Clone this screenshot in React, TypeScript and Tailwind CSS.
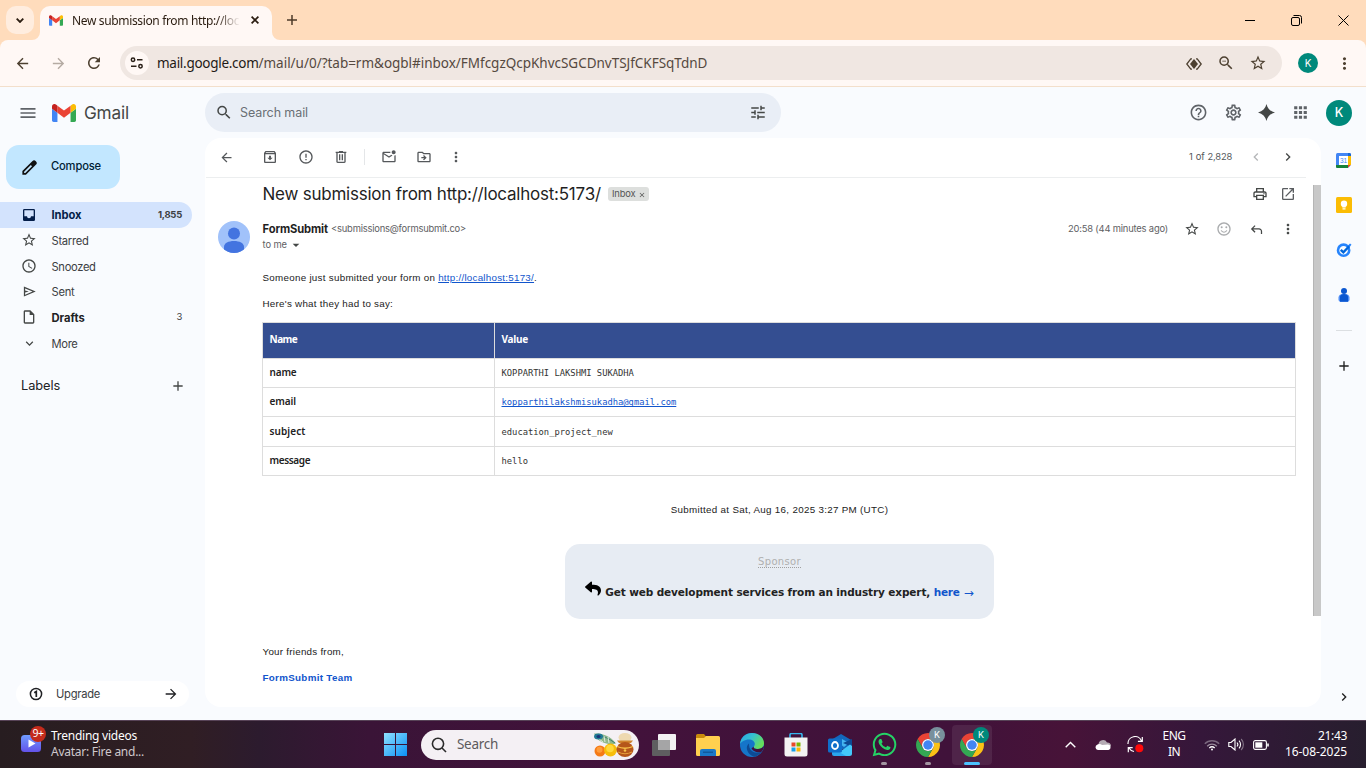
import type { ReactNode } from "react";
import {
  MdAdd,
  MdApps,
  MdArrowBack,
  MdArrowDropDown,
  MdArrowForward,
  MdChevronLeft,
  MdChevronRight,
  MdClose,
  MdErrorOutline,
  MdExpandMore,
  MdHelpOutline,
  MdMenu,
  MdMoreVert,
  MdOpenInNew,
  MdOutlineArchive,
  MdOutlineDriveFileMove,
  MdOutlineInsertDriveFile,
  MdOutlineMarkEmailUnread,
  MdOutlinePrint,
  MdOutlineSentimentSatisfied,
  MdOutlineSettings,
  MdRefresh,
  MdSchedule,
  MdSearch,
  MdStarBorder,
  MdTune,
  MdZoomOut,
} from "react-icons/md";
import { FaReply, FaWhatsapp } from "react-icons/fa";

function GmailMark({ className }: { className: string }) {
  return (
    <svg viewBox="52 42 88 66" className={className}>
      <path fill="#4285f4" d="M58 108h14V74L52 59v43c0 3.32 2.69 6 6 6" />
      <path fill="#34a853" d="M120 108h14c3.32 0 6-2.69 6-6V59l-20 15" />
      <path fill="#fbbc04" d="M120 48v26l20-15v-8c0-7.42-8.47-11.65-14.4-7.2" />
      <path fill="#ea4335" d="M72 74V48l24 18 24-18v26L96 92" />
      <path fill="#c5221f" d="M52 51v8l20 15V48l-5.6-4.2c-5.94-4.45-14.4-.22-14.4 7.2" />
    </svg>
  );
}

/** Fixed-width slot that centres its icon, so neighbouring icons share a rhythm. */
function Slot({ className, children }: { className: string; children: ReactNode }) {
  return <div className={"flex shrink-0 items-center justify-center " + className}>{children}</div>;
}

function TabStrip() {
  return (
    <div className="flex h-10 items-end bg-[#ffdcbc] text-[#2a1c10]">
      <Slot className="mb-1.5 ml-1.5 h-7 w-7 rounded-[10px] bg-[#ffeddf]">
        <svg viewBox="0 0 8 5" className="h-[5px] w-2" fill="none" stroke="currentColor" strokeWidth="1.800">
          <path d="M.7.700L4 4 7.300.700" />
        </svg>
      </Slot>
      <div className="relative ml-1.5 flex h-[34px] w-[232px] items-center rounded-t-[10px] bg-[#fff8f5] pb-1.5">
        <svg className="absolute bottom-0 -left-2 h-2 w-2" viewBox="0 0 8 8">
          <path fill="#fff8f5" d="M8 0v8H0a8 8 0 0 0 8-8" />
        </svg>
        <svg className="absolute -right-2 bottom-0 h-2 w-2" viewBox="0 0 8 8">
          <path fill="#fff8f5" d="M0 0v8h8a8 8 0 0 1-8-8" />
        </svg>
        <GmailMark className="ml-[9px] h-[11px] w-[14px]" />
        <div className="ml-[9px] w-[167px] overflow-hidden whitespace-nowrap [mask-image:linear-gradient(to_right,black_145px,transparent_168px)] pt-px font-['Noto_Sans',sans-serif] text-[12px] leading-4 tracking-[-0.35px]">
          New submission from http://loc
        </div>
        <Slot className="ml-2 h-4 w-4">
          <svg viewBox="0 0 8 8" className="h-2 w-2" stroke="currentColor" strokeWidth="1.700">
            <path d="M.6.600l6.800 6.800M7.400.600L.600 7.400" />
          </svg>
        </Slot>
      </div>
      <Slot className="mb-3 ml-3 h-4 w-4">
        <svg viewBox="0 0 10 10" className="h-[10px] w-[10px]" stroke="#4d3a28" strokeWidth="1.500">
          <path d="M0 5h10M5 0v10" />
        </svg>
      </Slot>
      <div className="mb-2 ml-auto flex items-center text-black">
        <svg viewBox="0 0 10 10" className="mr-9 h-[10px] w-[10px]" stroke="currentColor" shapeRendering="crispEdges">
          <path d="M0 4.500h10" />
        </svg>
        <svg viewBox="0 0 11 11" className="mr-9 h-[11px] w-[11px]" fill="none" stroke="currentColor">
          <rect x=".5" y="2.500" width="8" height="8" rx="1.500" />
          <path d="M2.500 .5h6a2 2 0 0 1 2 2v6" />
        </svg>
        <svg viewBox="0 0 11 11" className="my-1.5 mr-[17px] h-[11px] w-[11px]" fill="none" stroke="currentColor">
          <path d="M.5.5l10 10M10.500.5l-10 10" />
        </svg>
      </div>
    </div>
  );
}

function Toolbar() {
  return (
    <div className="h-[47px] bg-[#ffdcbc]">
      <div className="flex h-[47px] items-center rounded-t-[8px] border-b border-[#f3dfcb] bg-[#fff8f5] text-[#4d4030]">
        <Slot className="ml-3 w-5">
          <MdArrowBack className="h-[17px] w-[17px]" />
        </Slot>
        <Slot className="ml-4 w-5 text-[#b5aba3]">
          <MdArrowForward className="h-[17px] w-[17px]" />
        </Slot>
        <Slot className="ml-4 w-5">
          <MdRefresh className="h-[18px] w-[18px]" />
        </Slot>
        <div className="ml-4 flex h-[34px] w-[1162px] shrink-0 items-center rounded-full bg-[#f0e7e2]">
          <Slot className="ml-[5px] h-6 w-6 rounded-full bg-[#fff8f5]">
            <svg viewBox="0 0 14 12" className="h-3 w-[14px]" fill="none" stroke="#2a2018" strokeWidth="1.500">
              <circle cx="3" cy="2.700" r="1.700" />
              <path d="M7 2.700h5.500M1 9.300h5.500" />
              <circle cx="10.500" cy="9.300" r="1.700" />
            </svg>
          </Slot>
          <div className="ml-2 font-['Noto_Sans',sans-serif] text-[13.500px] leading-5 whitespace-nowrap text-[#55493f]">
            <span className="tracking-[-0.28px] text-[#1f1a16]">mail.google.com</span>
            <span className="tracking-[-0.02px]">/mail/u/0/?tab=rm&amp;ogbl#inbox/FMfcgzQcpKhvcSGCDnvTSJfCKFSqTdnD</span>
          </div>
          <Slot className="ml-auto w-8">
            <svg viewBox="0 0 16 12" className="mt-px h-3 w-4" fill="none" stroke="currentColor" strokeWidth="1.300">
              <path d="M6 .8H4.800L.8 6l4 5.200H6M10 .8h1.200l4 5.200-4 5.200H10" />
              <path d="M8 1l4 5-4 5-4-5z" fill="currentColor" stroke="none" />
            </svg>
          </Slot>
          <Slot className="w-8">
            <MdZoomOut className="h-[18px] w-[18px]" />
          </Slot>
          <Slot className="mr-2 w-8">
            <MdStarBorder className="h-[18px] w-[18px]" />
          </Slot>
        </div>
        <Slot className="ml-4 h-5 w-5 rounded-full bg-[#00897b] font-['Inter',sans-serif] text-[10px] text-white">K</Slot>
        <Slot className="ml-4 w-5">
          <MdMoreVert className="h-[19px] w-[19px]" />
        </Slot>
      </div>
    </div>
  );
}

function GmailHeader() {
  return (
    <div className="flex h-[51px] items-center text-[#5f6368]">
      <Slot className="ml-[18px] w-5">
        <MdMenu className="h-5 w-5" />
      </Slot>
      <GmailMark className="ml-3.5 h-[18px] w-6" />
      <div className="ml-2 w-[50px] text-[17.200px] tracking-[-0.2px] text-[#444746]">Gmail</div>
      <div className="ml-[71px] flex h-[39px] w-[576px] items-center rounded-full bg-[#e9eef6]">
        <Slot className="ml-[10px] w-[18px]">
          <MdSearch className="h-[19px] w-[19px] text-[#444746]" />
        </Slot>
        <div className="ml-[7px] pt-px text-[12.500px] tracking-[-0.09px] text-[#6a6f75]">Search mail</div>
        <Slot className="mr-[14px] ml-auto w-[18px]">
          <MdTune className="h-[19px] w-[19px] text-[#444746]" />
        </Slot>
      </div>
      <div className="mr-[14px] ml-auto flex items-center">
        <Slot className="w-[35px]">
          <MdHelpOutline className="h-[19px] w-[19px]" />
        </Slot>
        <Slot className="w-[35px]">
          <MdOutlineSettings className="h-[19px] w-[19px]" />
        </Slot>
        <Slot className="mr-px w-[31px]">
          <svg viewBox="0 0 24 24" className="h-[17px] w-[17px]" fill="#444746">
            <path d="M12 0c1.500 6.500 5.500 10.500 12 12-6.500 1.500-10.500 5.500-12 12-1.500-6.500-5.500-10.500-12-12C6.500 10.500 10.500 6.500 12 0z" />
          </svg>
        </Slot>
        <Slot className="w-[35px]">
          <MdApps className="h-[19px] w-[19px]" />
        </Slot>
        <Slot className="ml-2 h-[26px] w-[26px] rounded-full bg-[#00897b] pt-px text-[12.500px] font-medium text-white">K</Slot>
      </div>
    </div>
  );
}

function NavItem({ icon, label, count, className = "" }: { icon: ReactNode; label: ReactNode; count?: string; className?: string }) {
  return (
    <div className={"flex h-[25.650px] w-[192px] items-center rounded-r-full pr-[10px] text-[11.200px] text-[#3c4043] " + className}>
      <Slot className="ml-[21px] w-4 text-[#444746]">{icon}</Slot>
      <div className="ml-[14.500px] pt-px leading-4">{label}</div>
      {count && <div className="ml-auto text-[9.500px] tracking-[-0.25px]">{count}</div>}
    </div>
  );
}

function Sidebar() {
  return (
    <div className="flex w-[205px] shrink-0 flex-col">
      <div className="mt-[7px] ml-1.5 flex h-11 w-[114px] items-center rounded-[13px] bg-[#c2e7ff] text-[#001d35]">
        <Slot className="ml-[15px] w-4">
          <svg viewBox="0 0 24 24" className="h-[19px] w-[19px] shrink-0" fill="#111">
            <path fillRule="evenodd" d="M3 21v-4.500L15.500 4a3 3 0 0 1 4.500 0 3 3 0 0 1 0 4.500L7.500 21zM5.200 18.800h1.500l8.500-8.500-1.500-1.500-8.500 8.500z" />
          </svg>
        </Slot>
        <div className="ml-[14px] pb-px text-[11.200px] font-medium tracking-[-0.17px]">Compose</div>
      </div>
      <div className="mt-[13px]">
        <NavItem
          className="bg-[#d3e3fd] font-bold"
          icon={
            <svg viewBox="0 0 24 24" className="h-4 w-4" fill="#041e49">
              <path fillRule="evenodd" d="M5 3h14a2 2 0 0 1 2 2v14a2 2 0 0 1-2 2H5a2 2 0 0 1-2-2V5a2 2 0 0 1 2-2zm0 2v9h4a3 3 0 0 0 6 0h4V5z" />
            </svg>
          }
          label={<span className="tracking-[-0.06px] text-[#041e49]">Inbox</span>}
          count="1,855"
        />
        <NavItem icon={<MdStarBorder className="h-4 w-4" />} label={<span className="tracking-[-0.28px]">Starred</span>} />
        <NavItem icon={<MdSchedule className="h-4 w-4" />} label={<span className="tracking-[-0.33px]">Snoozed</span>} />
        <NavItem
          icon={
            <svg viewBox="0 0 24 24" className="h-[15px] w-[15px]" fill="currentColor">
              <path d="M3 20V4l19 8zm2-3l11.850-5L5 7v3.500l6 1.500-6 1.500z" />
            </svg>
          }
          label={<span className="tracking-[-0.25px]">Sent</span>}
        />
        <NavItem icon={<MdOutlineInsertDriveFile className="h-4 w-4" />} label={<span className="font-bold text-[#202124]">Drafts</span>} count="3" />
        <NavItem icon={<MdExpandMore className="h-[15px] w-[15px]" />} label={<span className="tracking-[-0.34px]">More</span>} />
      </div>
      <div className="mt-5 flex h-[20px] items-center text-[#202124]">
        <div className="ml-[21px] text-[12.800px] tracking-[-0.05px]">Labels</div>
        <Slot className="mr-[19px] ml-auto w-4">
          <MdAdd className="h-4 w-4 text-[#444746]" />
        </Slot>
      </div>
      <div className="mt-auto mb-[13px] ml-4 flex h-[26px] w-[173px] items-center rounded-full bg-white text-[#202124]">
        <Slot className="ml-3 w-4">
          <svg viewBox="0 0 14 14" className="h-[14px] w-[14px]" fill="none" stroke="currentColor" strokeWidth="1.500">
            <circle cx="7" cy="7" r="5.600" />
            <path d="M5.200 5.700L7.300 4.500V10" strokeWidth="1.700" />
          </svg>
        </Slot>
        <div className="ml-3 text-[11.200px] tracking-[-0.27px] text-[#3c4043]">Upgrade</div>
        <Slot className="mr-[10px] ml-auto w-4">
          <MdArrowForward className="h-4 w-4" />
        </Slot>
      </div>
    </div>
  );
}

function MailToolbar() {
  return (
    <div className="mr-[15px] ml-px flex h-10 items-center border-b border-[#eceeef] pb-px text-[#55585b]">
      <Slot className="ml-2 w-6">
        <MdArrowBack className="h-[15px] w-[15px]" />
      </Slot>
      <Slot className="ml-5 w-6">
        <MdOutlineArchive className="h-4 w-4" />
      </Slot>
      <Slot className="ml-3 w-6">
        <MdErrorOutline className="h-4 w-4" />
      </Slot>
      <Slot className="ml-[11px] w-6">
        <svg viewBox="0 0 24 24" className="h-4 w-4" fill="currentColor">
          <path d="M7 21q-.825 0-1.412-.587T5 19V6H4V4h5V3h6v1h5v2h-1v13q0 .825-.587 1.413T17 21zM17 6H7v13h10zM9 17h2V8H9zm4 0h2V8h-2z" />
        </svg>
      </Slot>
      <div className="ml-[11px] h-4 w-px bg-[#e4e6e8]" />
      <Slot className="ml-3 w-6">
        <MdOutlineMarkEmailUnread className="h-4 w-4" />
      </Slot>
      <Slot className="ml-[11px] w-6">
        <MdOutlineDriveFileMove className="h-4 w-4" />
      </Slot>
      <Slot className="ml-2 w-6">
        <MdMoreVert className="h-4 w-4" />
      </Slot>
      <div className="ml-auto text-[9.400px] tracking-[-0.2px] [word-spacing:0.6px]">1 of 2,828</div>
      <Slot className="ml-3 w-6 text-[#b4b6b8]">
        <MdChevronLeft className="h-4 w-4" />
      </Slot>
      <Slot className="mr-1.5 ml-2 w-6 text-[#444746]">
        <MdChevronRight className="h-4 w-4" />
      </Slot>
    </div>
  );
}

const rows: { name: ReactNode; value: ReactNode; className: string }[] = [
  { name: <span className="tracking-[-0.17px]">name</span>, value: "KOPPARTHI LAKSHMI SUKADHA", className: "h-[29px]" },
  {
    name: <span className="tracking-[-0.09px]">email</span>,
    value: <span className="text-[#1155cc] underline">kopparthilakshmisukadha@gmail.com</span>,
    className: "h-[29px]",
  },
  { name: <span className="tracking-[0.09px]">subject</span>, value: "education_project_new", className: "h-[30px]" },
  { name: <span className="tracking-[-0.36px]">message</span>, value: "hello", className: "h-[29px]" },
];

function FormTable() {
  return (
    <div className="mt-[5px] w-[1034px] border-t border-l border-[#dddddd] font-['Noto_Sans',sans-serif] text-[10px]">
      <div className="flex h-9 font-bold text-white">
        <div className="flex w-[232px] items-center border-r border-b border-[#dddddd] bg-[#344e91] pb-0.5 pl-[6.500px] tracking-[-0.5px]">Name</div>
        <div className="flex flex-1 items-center border-r border-b border-[#dddddd] bg-[#344e91] pb-0.5 pl-[6.500px] tracking-[-0.25px]">Value</div>
      </div>
      {rows.map((row, i) => (
        <div key={i} className={"flex " + row.className}>
          <div className="flex w-[232px] items-center border-r border-b border-[#dddddd] pb-px pl-[6.500px] font-semibold text-[#222222]">{row.name}</div>
          <div className="flex flex-1 items-center border-r border-b border-[#dddddd] pt-0.5 pl-[6.500px] font-['DejaVu_Sans_Mono',monospace] text-[8.800px] text-[#333333]">
            <span>{row.value}</span>
          </div>
        </div>
      ))}
    </div>
  );
}

function MailCard() {
  return (
    <div className="flex h-[569px] w-[1116px] flex-col rounded-2xl bg-white">
      <MailToolbar />
      <div className="flex flex-1">
        <div className="w-[1108px] pl-[13px]">
          <div className="flex h-8 items-center pl-11">
            <div className="w-[338px] pt-0.5 pl-[0.500px] text-[17px] tracking-[-0.230px] whitespace-nowrap text-[#1f1f1f]">New submission from http://localhost:5173/</div>
            <div className="ml-2 flex h-[14px] w-[41px] items-center rounded-[3px] bg-[#dddfdd] pl-1 text-[9.400px] tracking-[-0.2px] text-[#555]">
              Inbox
              <MdClose className="mt-0.5 ml-[3px] h-2 w-2" />
            </div>
            <Slot className="ml-auto w-7 text-[#444746]">
              <MdOutlinePrint className="h-4 w-4" />
            </Slot>
            <Slot className="mr-[11px] w-7 text-[#5a5d60]">
              <MdOpenInNew className="h-4 w-4" />
            </Slot>
          </div>
          <div className="flex h-[43px] items-start pt-[11px]">
            <svg viewBox="0 0 32 32" className="h-8 w-8 rounded-full">
              <rect width="32" height="32" fill="#a1c2fa" />
              <circle cx="16" cy="12.500" r="6" fill="#4374e0" />
              <path d="M6 26c0-4 4.500-6 10-6s10 2 10 6V32H6z" fill="#4374e0" />
            </svg>
            <div className="ml-[12.500px]">
              <div className="flex h-4 items-center">
                <span className="pt-px text-[11.200px] font-bold tracking-[-0.110px] text-[#1f1f1f]">FormSubmit</span>
                <span className="ml-[3px] text-[9.400px] tracking-[-0.210px] text-[#5e6063]">&lt;submissions@formsubmit.co&gt;</span>
              </div>
              <div className="flex h-4 items-center text-[9.400px] tracking-[-0.1px] text-[#5e6063]">
                to me
                <MdArrowDropDown className="ml-px h-4 w-4 text-[#444746]" />
              </div>
            </div>
            <div className="mr-[11px] ml-auto flex h-4 items-center text-[#444746]">
              <div className="mr-[10px] text-[9.400px] tracking-[-0.190px] text-[#5e6063]">20:58 (44 minutes ago)</div>
              <Slot className="w-7">
                <MdStarBorder className="h-4 w-4" />
              </Slot>
              <Slot className="ml-1 w-7 text-[#a9abad]">
                <MdOutlineSentimentSatisfied className="h-4 w-4" />
              </Slot>
              <Slot className="ml-1 w-7">
                <svg viewBox="0 0 24 24" className="h-[15px] w-[15px]" fill="currentColor">
                  <path d="M19 19v-4q0-1.250-.875-2.125T16 12H6.825l3.600 3.600L9 17l-6-6 6-6 1.425 1.400-3.600 3.600H16q2.075 0 3.538 1.463T21 15v4z" />
                </svg>
              </Slot>
              <Slot className="ml-1 w-7">
                <MdMoreVert className="h-4 w-4" />
              </Slot>
            </div>
          </div>
          <div className="mt-3 ml-11 font-['Liberation_Sans',sans-serif] text-[9.800px] text-[#222222]">
            <div className="h-[26px] pl-[0.500px] leading-[26px] whitespace-pre">
              <span className="tracking-[0.28px]">Someone just submitted your form on </span>
              <span className="tracking-[0.25px] text-[#1155cc] underline">http://localhost:5173/</span>.
            </div>
            <div className="h-[26px] pl-[0.500px] leading-[26px] tracking-[0.26px]">Here's what they had to say:</div>
            <FormTable />
            <div className="mt-[21px] w-[1035px] text-center leading-[26px] tracking-[0.3px]">Submitted at Sat, Aug 16, 2025 3:27 PM (UTC)</div>
            <div className="mt-[21px] ml-[303px] flex h-[75px] w-[429px] flex-col items-center rounded-[15px] bg-[#e7ecf3] font-['DejaVu_Sans',sans-serif]">
              <div className="mt-[11px] h-[13px] border-b border-dotted border-[#a0a0a0] text-[10px] leading-[13px] tracking-[0.34px] text-[#b0b0b0]">Sponsor</div>
              <div className="mt-[10px] flex h-[30px] items-center text-[10.500px] font-bold whitespace-pre">
                <FaReply className="mb-2.5 h-[17px] w-4 text-black" />
                <span className="ml-1 tracking-[-0.120px]">Get web development services from an industry expert, </span>
                <span className="tracking-[-0.230px] text-[#1155cc]">here</span>
                <span className="ml-1 text-[12px] font-normal text-[#1155cc]">→</span>
              </div>
            </div>
            <div className="mt-[20px] h-[26px] pl-[0.500px] leading-[26px] tracking-[0.25px]">Your friends from,</div>
            <div className="h-[26px] pl-[0.500px] leading-[26px] font-bold tracking-[0.310px] text-[#1155cc]">FormSubmit Team</div>
          </div>
        </div>
        <div className="mt-[7px] h-[431px] w-2 border-l border-[#b5b5b5] bg-[#c8c8c8]" />
      </div>
    </div>
  );
}

function SidePanel() {
  return (
    <div className="ml-auto flex w-[45px] flex-col items-center">
      <svg viewBox="0 0 15 15" className="mt-[15px] h-[15px] w-[15px]">
        <rect width="15" height="15" rx="1.500" fill="#4285f4" />
        <path d="M12 3h3v9h-3z" fill="#fbbc04" />
        <path d="M0 12h12v3H1.500A1.500 1.500 0 0 1 0 13.500z" fill="#188038" />
        <path d="M12 12h3l-3 3z" fill="#ea4335" />
        <path d="M15 12v3h-3z" fill="#f9fbfd" />
        <path d="M12 0h1.500A1.500 1.500 0 0 1 15 1.500V3h-3z" fill="#1967d2" />
        <path d="M3 3h9v9H3z" fill="#fff" />
        <text x="7.500" y="10" fontSize="6.500" textAnchor="middle" fill="#4285f4" fontFamily="Liberation Sans, sans-serif">31</text>
      </svg>
      <svg viewBox="0 0 16 16" className="mt-[29px] h-4 w-4">
        <rect width="16" height="16" rx="1.500" fill="#fbbc04" />
        <circle cx="8" cy="6.800" r="3.200" fill="#fff" />
        <path d="M6.300 9h3.400v1.600H6.300zM6.500 11.300h3v1.200h-3z" fill="#fff" />
      </svg>
      <svg viewBox="0 0 16 16" className="mt-[29px] h-4 w-4" fill="none">
        <circle cx="7.600" cy="8.200" r="5.600" stroke="#2684fc" strokeWidth="2.600" />
        <path d="M4.800 7.800l2.600 2.500 6-6.300" stroke="#0066da" strokeWidth="2.400" />
        <path d="M12 3.500l2-2 1.500 1.300-2 2.200z" fill="#2684fc" />
      </svg>
      <svg viewBox="0 0 16 16" className="mt-[29px] h-4 w-4">
        <path d="M2.500 10.500c0-2.500 2-3.500 5.500-3.500s5.500 1 5.500 3.500v2.300a2 2 0 0 1-2 2h-7a2 2 0 0 1-2-2z" fill="#4f8df5" />
        <path d="M4 9.500C4.500 7.700 6 7 8 7s3.500.7 4 2.500v5.300H4z" fill="#0b57d0" />
        <circle cx="8" cy="4" r="3" fill="#0b57d0" />
      </svg>
      <div className="mt-[27px] h-px w-4 bg-[#dcdfe2]" />
      <MdAdd className="mt-[27px] h-4 w-4 text-[#1f1f1f]" />
      <MdChevronRight className="mt-auto mb-[15px] h-4 w-4 text-[#1f1f1f]" />
    </div>
  );
}

function ChromeIcon() {
  return (
    <svg viewBox="0 0 48 48" className="h-6 w-6">
      <path fill="#ea4335" d="M24 12H44.780A24 24 0 0 0 3.220 12L13.610 30A12 12 0 0 1 24 12Z" />
      <path fill="#fbc116" d="M34.390 30L24 48A24 24 0 0 0 44.780 12H24A12 12 0 0 1 34.390 30Z" />
      <path fill="#34a853" d="M13.610 30L3.220 12A24 24 0 0 0 24 48L34.390 30A12 12 0 0 1 13.610 30Z" />
      <circle cx="24" cy="24" r="12" fill="#fff" />
      <circle cx="24" cy="24" r="9.500" fill="#4285f4" />
    </svg>
  );
}

function TaskApp({ className = "", mark, children }: { className?: string; mark?: ReactNode; children: ReactNode }) {
  return (
    <div className={"relative flex h-10 w-10 shrink-0 items-center justify-center rounded " + className}>
      {children}
      {mark}
    </div>
  );
}

function FestivalArt() {
  return (
    <svg viewBox="0 0 42 26" className="h-[26px] w-[42px]">
      <path d="M1 1.500C8 1 17 3 23 11.500 17 13 5 12 1 1.500z" fill="#8fb88a" />
      <path d="M2 2.500C10 3.500 16 6.500 22 11" stroke="#2c6e6a" strokeWidth=".8" fill="none" />
      <path d="M6 7l4 3M11 4l1 6M15 5l1 6" stroke="#e9efe6" strokeWidth=".9" />
      <ellipse cx="5.500" cy="4.500" rx="4.500" ry="3" fill="#217a94" />
      <ellipse cx="5.500" cy="4.500" rx="2" ry="1.500" fill="#193377" />
      <circle cx="7" cy="19" r="5.500" fill="#f57a16" />
      <circle cx="6.500" cy="17.800" r="3" fill="#ff9c3a" />
      <circle cx="17.500" cy="18" r="6.500" fill="#f7bd09" />
      <circle cx="17" cy="16.500" r="3.800" fill="#ffd83a" />
      <ellipse cx="32" cy="5.500" rx="6.500" ry="4.500" fill="#eed9b0" />
      <path d="M24 8.500h16l-2 2.500H26z" fill="#d0842e" />
      <ellipse cx="32" cy="17.500" rx="8.500" ry="7.500" fill="#b5561a" />
      <path d="M24 14.500q8 3.500 16 0" stroke="#f8c24a" strokeWidth="1.300" fill="none" />
      <path d="M25 20q7 3.500 14 0" stroke="#e8a03a" strokeWidth="1" fill="none" />
      <circle cx="32" cy="18.500" r="1.300" fill="#f8c24a" />
    </svg>
  );
}

function Taskbar() {
  return (
    <div className="flex h-12 items-center border-t border-[#574357] bg-[linear-gradient(90deg,#271d20_0%,#301e24_14%,#2c1b2e_19%,#3a1437_27%,#42123b_45%,#40123a_70%,#471338_78%,#35173a_88%,#271e2e_100%)] font-['Noto_Sans',sans-serif] text-white">
      <div className="relative ml-5 h-10 w-7 shrink-0">
        <svg viewBox="0 0 20 17" className="mt-[10px] ml-px h-[17px] w-5">
          <defs>
            <linearGradient id="clip" x1="0" y1="0" x2="0" y2="1">
              <stop offset="0" stopColor="#6f9cff" />
              <stop offset="1" stopColor="#6352e8" />
            </linearGradient>
          </defs>
          <rect width="20" height="17" rx="3.500" fill="url(#clip)" />
          <path d="M7.500 4.500v8l7-4z" fill="#fff" />
        </svg>
        <div className="absolute top-[1px] left-[10px] flex h-4 w-4 items-center justify-center rounded-full bg-[#c42b1c] pb-px text-[10.500px] leading-4 tracking-[-0.5px]">9+</div>
      </div>
      <div className="ml-[3px] w-[110px] pb-0.5 text-[12px] leading-4 whitespace-nowrap">
        <div className="tracking-[-0.250px]">Trending videos</div>
        <div className="tracking-[-0.260px] text-[#cfc8cc]">Avatar: Fire and...</div>
      </div>
      <svg viewBox="0 0 23 23" className="ml-[223px] h-[23px] w-[23px] shrink-0">
        <defs>
          <linearGradient id="win" x1="0" y1="0" x2="1" y2="1">
            <stop offset="0" stopColor="#8fe1ff" />
            <stop offset="1" stopColor="#0a90f5" />
          </linearGradient>
        </defs>
        <path d="M0 0h11v11H0zM12 0h11v11H12zM0 12h11v11H0zM12 12h11v11H12z" fill="url(#win)" />
      </svg>
      <div className="ml-[14px] flex h-[30px] w-[218px] shrink-0 items-center rounded-full bg-[#f4f0f4]">
        <svg viewBox="0 0 16 16" className="ml-[10px] h-4 w-4" fill="none" stroke="#2b2b2b" strokeWidth="1.600">
          <circle cx="7" cy="6.800" r="5.600" />
          <path d="M11 11l4 4" />
        </svg>
        <div className="ml-[10px] text-[13.500px] tracking-[-0.290px] text-[#5c5a5c]">Search</div>
        <div className="mr-1 ml-auto">
          <FestivalArt />
        </div>
      </div>
      <div className="ml-[5px] flex items-center gap-1">
        <TaskApp>
          <svg viewBox="0 0 24 22" className="h-[22px] w-6">
            <rect x="6" width="18" height="16" rx="1" fill="#f2f2f2" />
            <rect y="6" width="18" height="16" rx="1" fill="#5e5e60" />
            <path d="M6 6h12v10H6z" fill="#a5a5a6" />
          </svg>
        </TaskApp>
        <TaskApp>
          <svg viewBox="0 0 24 22" className="h-[22px] w-6">
            <path d="M0 1.500A1.500 1.500 0 0 1 1.500 0H8l2 2.500V5H0z" fill="#c98b0c" />
            <path d="M0 4h8l2-2h12.500A1.500 1.500 0 0 1 24 3.500v17a1.500 1.500 0 0 1-1.500 1.500h-21A1.500 1.500 0 0 1 0 20.500z" fill="#ffd04f" />
            <path d="M4 22v-5a2 2 0 0 1 2-2h12a2 2 0 0 1 2 2v5z" fill="#1a78c8" />
            <path d="M7 17.500h10v1.500H7z" fill="#105a9e" />
          </svg>
        </TaskApp>
        <TaskApp>
          <svg viewBox="0 0 24 24" className="h-6 w-6">
            <defs>
              <linearGradient id="edgeTop" x1="0" y1="0" x2="1" y2=".5">
                <stop offset="0" stopColor="#2aa5e8" />
                <stop offset=".5" stopColor="#35c1cf" />
                <stop offset="1" stopColor="#66dd5a" />
              </linearGradient>
            </defs>
            <circle cx="12" cy="12" r="12" fill="#1575c9" />
            <path d="M0 11C.5 4.500 5.500 0 12 0c7 0 12 4.800 12 10.300 0 3.700-2.800 5.700-6 5.700-2.700 0-4.200-1-4.200-2 0-.8 1-1.200 1-3C14.800 8.500 12.300 6.500 9 6.500 4.500 6.500 1 9 0 11z" fill="url(#edgeTop)" />
            <path d="M9 10.500c-2 1.500-2.500 3.500-2 6 .8 3.800 4 6.300 7.500 7.200 3-.8 5.500-2.700 7-5-5 2.500-13 .5-12.500-8.200z" fill="#0d4a94" />
            <path d="M14 13.500c-.8 1-.2 2.500 4 2.500 2.400 0 4.300-1 5.300-2.700l.5.700c-.4 2-1.200 3.500-2.300 4.700-4 1.500-9-.5-10-3.500z" fill="#40113a" />
          </svg>
        </TaskApp>
        <TaskApp>
          <svg viewBox="0 0 24 24" className="h-6 w-6">
            <path d="M6 5V2a1.500 1.500 0 0 1 1.500-1.500h9A1.500 1.500 0 0 1 18 2v3" fill="none" stroke="#37b6ee" strokeWidth="1.600" />
            <path d="M.5 4.500h23V21a2.500 2.500 0 0 1-2.500 2.500H3A2.500 2.500 0 0 1 .5 21z" fill="#f3f3f3" />
            <path d="M7.500 9.500h4v4h-4z" fill="#e8482a" />
            <path d="M12.500 9.500h4v4h-4z" fill="#7cb500" />
            <path d="M7.500 14.500h4v4h-4z" fill="#18a0e8" />
            <path d="M12.500 14.500h4v4h-4z" fill="#fbb604" />
          </svg>
        </TaskApp>
        <TaskApp>
          <svg viewBox="0 0 24 22" className="h-[22px] w-6">
            <path d="M4 5.500L13 0l11 6.500V13L12 16z" fill="#1268bd" />
            <path d="M14 5l7 4-5 4-4-3z" fill="#45b5f0" />
            <path d="M15 9l9-4v8z" fill="#0d4a94" />
            <path d="M6 22L22 10.500l2 1.500v7.500a2.500 2.500 0 0 1-2.500 2.500z" fill="#43c8fa" />
            <path d="M4 14l14 8H6a2 2 0 0 1-2-2z" fill="#2aa6ee" />
            <rect y="4.500" width="14" height="14" rx="1.500" fill="#0f6fca" />
            <ellipse cx="7" cy="11.500" rx="3" ry="3.500" fill="none" stroke="#fff" strokeWidth="1.800" />
          </svg>
        </TaskApp>
        <TaskApp mark={<div className="absolute bottom-0 left-[17px] h-[3px] w-1.5 rounded-full bg-[#a395a1]" />}>
          <FaWhatsapp className="h-[27px] w-[27px] text-[#25d366]" />
        </TaskApp>
        <TaskApp
          mark={
            <>
              <div className="absolute top-0.5 left-[21px] flex h-4 w-4 items-center justify-center rounded-full bg-[#78909c] font-['Inter',sans-serif] text-[9px]">K</div>
              <div className="absolute bottom-0 left-[17px] h-[3px] w-1.5 rounded-full bg-[#a395a1]" />
            </>
          }
        >
          <ChromeIcon />
        </TaskApp>
        <TaskApp
          className="bg-white/8"
          mark={
            <>
              <div className="absolute top-0.5 left-[21px] flex h-4 w-4 items-center justify-center rounded-full bg-[#00897b] font-['Inter',sans-serif] text-[9px]">K</div>
              <div className="absolute bottom-0 left-3 h-[3px] w-4 rounded-full bg-[#4cc2ff]" />
            </>
          }
        >
          <ChromeIcon />
        </TaskApp>
      </div>
      <div className="mr-[19px] ml-auto flex items-center">
        <svg viewBox="0 0 11 7" className="mr-px h-[7px] w-[11px]" fill="none" stroke="#fff" strokeWidth="1.400">
          <path d="M.7 6.200L5.500 1.400l4.800 4.800" />
        </svg>
        <svg viewBox="0 0 16 11" className="ml-[18px] h-[11px] w-4">
          <path d="M3.500 5.500A4.500 4.500 0 0 1 12 3.500 3.500 3.500 0 0 1 16 7l-3 2H1.500A3 3 0 0 1 3.500 5z" fill="#b5abb4" />
          <path d="M3 11a2.700 2.700 0 0 1-.5-5.300C4 4.500 6 5 7 6l6-.5A2.800 2.800 0 0 1 13.500 11z" fill="#fff" />
        </svg>
        <svg viewBox="0 0 17 17" className="ml-4 h-[17px] w-[17px]" fill="none" stroke="#fff" strokeWidth="1.200">
          <path d="M1 8a7 7 0 0 1 13.500-3M15.300 1v4.400h-4.400M7 15.500a7 7 0 0 1-5-3.500M1.300 16.200v-4.500h4.400" />
          <circle cx="12.300" cy="12.300" r="4" fill="#ff0a0a" stroke="none" />
        </svg>
        <div className="ml-[17px] w-[26px] pb-px text-center text-[12px] leading-4 tracking-[-0.5px]">
          <div>ENG</div>
          <div>IN</div>
        </div>
        <svg viewBox="0 0 16 12" className="ml-[17px] h-3 w-4" fill="none" stroke="#fff" strokeWidth="1.300">
          <path d="M.8 4.800a10 10 0 0 1 14.400 0" opacity=".35" />
          <path d="M3.200 7.200a6.700 6.700 0 0 1 9.600 0" opacity=".5" />
          <path d="M5.300 9a4 4 0 0 1 5.400 0" />
          <circle cx="8" cy="10.500" r="1" fill="#fff" stroke="none" />
        </svg>
        <svg viewBox="0 0 17 13" className="ml-2 h-[13px] w-[17px]" fill="none" stroke="#fff" strokeWidth="1.100">
          <path d="M.8 4.500H3L7 1v11L3 8.500H.8z" />
          <path d="M9 4.500a3 3 0 0 1 0 4M11 2.700a5.500 5.500 0 0 1 0 7.600" />
          <path d="M13.200 1a8 8 0 0 1 0 11" opacity=".4" />
        </svg>
        <svg viewBox="0 0 16 10" className="ml-[8px] h-[10px] w-4" fill="none" stroke="#fff" strokeWidth="1.100">
          <rect x=".6" y=".6" width="12.800" height="8.800" rx="1.600" />
          <rect x="2.300" y="2.300" width="7" height="5.400" fill="#fff" stroke="none" />
          <path d="M15 3.500v3" strokeWidth="1.600" />
        </svg>
        <div className="ml-[14px] w-[64px] pb-0.5 text-right text-[12px] leading-4 whitespace-nowrap">
          <div className="tracking-[-0.340px]">21:43</div>
          <div className="tracking-[-0.060px]">16-08-2025</div>
        </div>
      </div>
    </div>
  );
}

export default function App() {
  return (
    <div className="flex h-[768px] w-[1366px] flex-col overflow-hidden bg-[#f9fbfe] font-['Inter',sans-serif]">
      <TabStrip />
      <Toolbar />
      <GmailHeader />
      <div className="flex h-[582px]">
        <Sidebar />
        <MailCard />
        <SidePanel />
      </div>
      <Taskbar />
    </div>
  );
}
